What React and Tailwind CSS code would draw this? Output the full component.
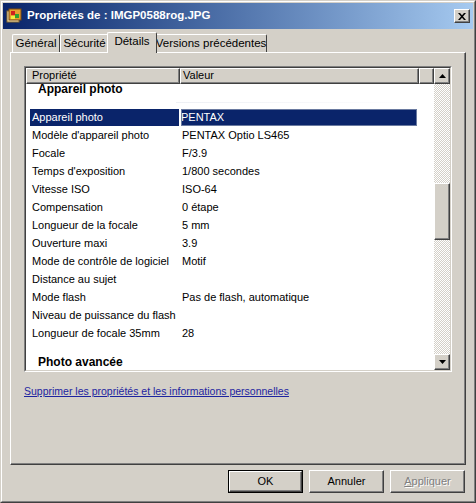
import React from 'react';

const rows = [
  ['Modèle d\'appareil photo', 'PENTAX Optio LS465'],
  ['Focale', 'F/3.9'],
  ['Temps d\'exposition', '1/800 secondes'],
  ['Vitesse ISO', 'ISO-64'],
  ['Compensation', '0 étape'],
  ['Longueur de la focale', '5 mm'],
  ['Ouverture maxi', '3.9'],
  ['Mode de contrôle de logiciel', 'Motif'],
  ['Distance au sujet', ''],
  ['Mode flash', 'Pas de flash, automatique'],
  ['Niveau de puissance du flash', ''],
  ['Longueur de focale 35mm', '28'],
];

const raised = 'border border-t-white border-l-white border-r-[#404040] border-b-[#404040]';
const checker = 'bg-[repeating-conic-gradient(#d4d0c8_0_25%,#ffffff_0_50%)] bg-[length:2px_2px]';

const Arrow = ({ down }) => (
  <svg width="7" height="4" viewBox="0 0 7 4">
    <path d={down ? 'M0 0h7L3.5 4z' : 'M3.5 0L7 4H0z'} fill="#000" />
  </svg>
);

const ScrollBtn = ({ down }) => (
  <div className={`w-[16px] h-[16px] bg-[#d4d0c8] ${raised} flex items-center justify-center shadow-[inset_-1px_-1px_0_#808080]`}>
    <Arrow down={down} />
  </div>
);

const Tab = ({ label, active, w }) => (
  <div
    className={`relative flex items-center justify-center whitespace-nowrap border-t border-l border-r border-t-white border-l-white border-r-[#404040] rounded-t-[2px] bg-[#d4d0c8] ${
      active ? 'h-[21px] -mb-[1px] z-10 -mx-[2px]' : 'h-[18px]'
    }`}
    style={{ width: w }}
  >
    <span className={active ? 'pb-[2px]' : ''}>{label}</span>
  </div>
);

const Button = ({ children, def, disabled }) => (
  <div className={`w-[75px] h-[23px] ${def ? 'border border-black' : ''}`}>
    <div className={`w-full h-full bg-[#d4d0c8] ${raised} flex items-center justify-center shadow-[inset_-1px_-1px_0_#808080] ${disabled ? 'text-[#808080] [text-shadow:1px_1px_0_#fff]' : ''}`}>
      {children}
    </div>
  </div>
);

export default function App() {
  return (
    <div className="w-[476px] h-[503px] bg-[#d4d0c8] border border-t-[#d4d0c8] border-l-[#d4d0c8] border-r-[#404040] border-b-[#404040] text-[11px] text-black overflow-hidden" style={{ fontFamily: '"Liberation Sans", Arial, sans-serif' }}>
      <div className="h-full border border-t-white border-l-white border-r-[#808080] border-b-[#808080] flex flex-col px-[1px] pt-[1px]">
        {/* Title bar */}
        <div className="h-[26px] bg-gradient-to-r from-[#0a246a] to-[#a6caf0] flex items-center pl-[3px] pr-[3px]">
          <svg width="16" height="16" viewBox="0 0 16 16" className="shrink-0">
            <rect x="1" y="3" width="12" height="11" fill="#f3e3b5" stroke="#8a6a2a" />
            <rect x="3" y="1" width="12" height="11" fill="#e8a030" stroke="#7a4a10" />
            <rect x="5" y="3" width="4" height="4" fill="#d02020" />
            <rect x="9" y="6" width="4" height="4" fill="#30a030" />
            <rect x="5" y="8" width="4" height="3" fill="#f0f040" />
          </svg>
          <span className="ml-[5px] text-white font-bold text-[11.5px]">Propriétés de : IMGP0588rog.JPG</span>
          <div className={`ml-auto w-[16px] h-[14px] bg-[#d4d0c8] ${raised} shadow-[inset_-1px_-1px_0_#808080] flex items-center justify-center`}>
            <svg width="8" height="7" viewBox="0 0 8 7">
              <path d="M0 0h2l2 2.2L6 0h2L5 3.5 8 7H6L4 4.8 2 7H0l3-3.5z" fill="#000" />
            </svg>
          </div>
        </div>

        {/* Tabs */}
        <div className="flex items-end pl-[9px] mt-[3px] h-[20px] text-[11.5px]">
          <Tab label="Général" w={48} />
          <Tab label="Sécurité" w={49} />
          <Tab label="Détails" active w={50} />
          <Tab label="Versions précédentes" w={112} />
        </div>

        {/* Panel */}
        <div className={`mx-[7px] h-[413px] ${raised} shadow-[inset_-1px_-1px_0_#808080] px-[13px] pt-[13px] flex flex-col`}>
          {/* List box */}
          <div className="h-[306px] w-[428px] border border-t-[#808080] border-l-[#808080] border-r-white border-b-white">
            <div className="h-full border border-t-[#404040] border-l-[#404040] border-r-[#d4d0c8] border-b-[#d4d0c8] bg-white flex">
              <div className="flex-1 flex flex-col overflow-hidden">
                {/* header */}
                <div className="flex h-[16px] shrink-0">
                  <div className={`w-[154px] bg-[#d4d0c8] ${raised} shadow-[inset_-1px_-1px_0_#808080] pl-[5px] leading-[13px]`}>Propriété</div>
                  <div className={`w-[239px] bg-[#d4d0c8] ${raised} shadow-[inset_-1px_-1px_0_#808080] pl-[2px] leading-[13px]`}>Valeur</div>
                  <div className={`flex-1 bg-[#d4d0c8] ${raised} shadow-[inset_-1px_-1px_0_#808080]`} />
                </div>
                {/* group */}
                <div className="h-[24px] shrink-0 pl-[12px] font-bold text-[12px] leading-[11px] relative">
                  Appareil photo
                  <div className="absolute left-[150px] right-[12px] bottom-[5px] h-px bg-gradient-to-r from-[#eef0f4] to-white" />
                </div>
                {/* selected row */}
                <div className="flex h-[18px] items-center shrink-0 pl-[4px]">
                  <div className="w-[149px] h-[17px] bg-[#0a246a] text-white pl-[2px] flex items-center">Appareil photo</div>
                  <div className="ml-[2px] w-[236px] h-[17px] bg-[#0a246a] text-white pl-[0px] flex items-center border-r border-dotted border-r-white outline outline-1 outline-[#6a7aa0] -outline-offset-1">PENTAX</div>
                </div>
                {rows.map(([k, v]) => (
                  <div key={k} className="flex h-[18px] items-center shrink-0 pl-[6px]">
                    <div className="w-[149px] whitespace-nowrap">{k}</div>
                    <div className="pl-[1px]">{v}</div>
                  </div>
                ))}
                <div className="pl-[12px] pt-[13px] font-bold text-[12px] leading-[14px]">Photo avancée</div>
              </div>
              {/* scrollbar */}
              <div className={`w-[16px] flex flex-col ${checker}`}>
                <ScrollBtn />
                <div className="h-[99px]" />
                <div className={`h-[57px] bg-[#d4d0c8] ${raised} shadow-[inset_-1px_-1px_0_#808080]`} />
                <div className="flex-1" />
                <ScrollBtn down />
              </div>
            </div>
          </div>

          <div className="mt-[12px] text-[#1d24a0] underline leading-[14px] text-[10.5px]">Supprimer les propriétés et les informations personnelles</div>
        </div>

        {/* Buttons */}
        <div className="flex justify-end gap-[6px] mt-[5px] pr-[8px]">
          <Button def>OK</Button>
          <Button>Annuler</Button>
          <Button disabled><span><span className="underline">A</span>ppliquer</span></Button>
        </div>
      </div>
    </div>
  );
}
